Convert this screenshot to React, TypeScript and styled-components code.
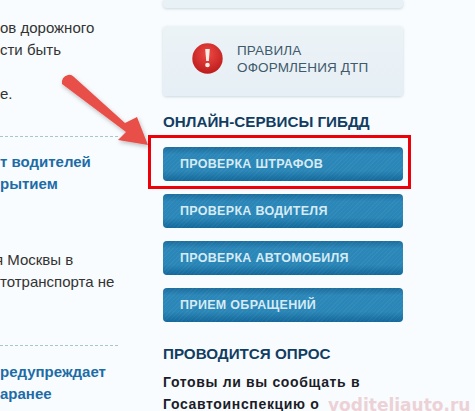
import React from "react";
import styled, { createGlobalStyle } from "styled-components";

const GlobalStyle = createGlobalStyle`
	html, body {
		margin: 0;
		padding: 0;
		background: #f8fcfe;
	}
`;

const Page = styled.div`
	position: relative;
	width: 475px;
	height: 411px;
	overflow: hidden;
	display: flex;
	background: #f8fcfe;
	font-family: "Liberation Sans", Arial, sans-serif;
`;

const Article = styled.div`
	width: 118px;
	margin-right: 45px;
	padding-top: 17px;
	flex: none;
	overflow: hidden;
`;

const Line = styled.div<{ $shift?: number }>`
	height: 22px;
	line-height: 22px;
	font-size: 15px;
	white-space: nowrap;
	color: #333;
	margin-left: ${props => props.$shift || 0}px;
`;

const LinkLine = styled(Line)`
	font-weight: bold;
	color: #1d6ca6;
`;

const Divider = styled.div<{ $top: number; $bottom: number }>`
	border-top: 1px dashed #a9c7c9;
	margin-top: ${props => props.$top}px;
	margin-bottom: ${props => props.$bottom}px;
`;

const Gap = styled.div<{ $size: number }>`
	height: ${props => props.$size}px;
`;

const Sidebar = styled.div`
	width: 240px;
	flex: none;
	display: flex;
	flex-direction: column;

	& > * {
		flex: none;
	}
`;

const CutCard = styled.div`
	height: 8px;
	background: #e8f1f6;
	border-radius: 0 0 4px 4px;
	box-shadow: 0 1px 3px rgba(120, 150, 170, 0.35);
`;

const RulesCard = styled.div`
	height: 70px;
	margin-top: 18px;
	display: flex;
	align-items: center;
	gap: 14px;
	padding: 0 0 5px 29px;
	box-sizing: border-box;
	background: linear-gradient(#ecf3f7, #e6eff5);
	border-radius: 4px;
	box-shadow: 0 1px 3px rgba(120, 150, 170, 0.35);
`;

const RulesText = styled.div`
	font-size: 13.5px;
	line-height: 17px;
	letter-spacing: 0.15px;
	color: #3f5a6b;
`;

const Heading = styled.div<{ $top: number }>`
	margin-top: ${props => props.$top}px;
	font-size: 15.2px;
	line-height: 18px;
	font-weight: bold;
	white-space: nowrap;
	color: #123d62;
`;

const ServiceList = styled.div`
	margin-top: 16px;
	display: flex;
	flex-direction: column;
	gap: 13px;
`;

const ServiceButton = styled.div`
	height: 34px;
	flex: none;
	display: flex;
	align-items: center;
	padding-left: 17px;
	font-size: 12.5px;
	font-weight: bold;
	letter-spacing: 0.3px;
	color: #d6ebf5;
	border-radius: 4px;
	background:
		repeating-linear-gradient(135deg, rgba(255, 255, 255, 0.04) 0 1px, transparent 1px 3px),
		linear-gradient(#1c6d9c 0, #2b87b8 22%, #2a86b6 70%, #13689a 100%);
`;

const Question = styled.div`
	margin-top: 8px;
	font-size: 14px;
	line-height: 22px;
	font-weight: bold;
	letter-spacing: 0.65px;
	white-space: nowrap;
	color: #1c1c28;
`;

const Highlight = styled.div`
	position: absolute;
	left: 148px;
	top: 135px;
	width: 263px;
	height: 54px;
	box-sizing: border-box;
	border: 3px solid #ee0008;
`;

const ArrowOverlay = styled.svg`
	position: absolute;
	left: 0;
	top: 0;
	pointer-events: none;
`;

const Watermark = styled.div`
	position: absolute;
	left: 328px;
	top: 395px;
	font-family: "DejaVu Sans", sans-serif;
	font-size: 17px;
	line-height: 20px;
	font-weight: bold;
	white-space: nowrap;
	color: #ecd2d6;
`;

function WarningIcon() {
	return (
		<svg width="31" height="31" viewBox="0 0 31 31" style={{ flex: "none" }}>
			<defs>
				<radialGradient id="warn" cx="50%" cy="35%" r="65%">
					<stop offset="0" stopColor="#ee4a45" />
					<stop offset="1" stopColor="#bd1c1c" />
				</radialGradient>
			</defs>
			<circle cx="15.5" cy="15.5" r="15.2" fill="url(#warn)" />
			<path d="M13.2 6h4.6l-1 12h-2.6z" fill="#fbeee6" />
			<circle cx="15.5" cy="22" r="2.3" fill="#fbeee6" />
		</svg>
	);
}

const services = ["ПРОВЕРКА ШТРАФОВ", "ПРОВЕРКА ВОДИТЕЛЯ", "ПРОВЕРКА АВТОМОБИЛЯ", "ПРИЕМ ОБРАЩЕНИЙ"];

export default function App() {
	return (
		<Page>
			<GlobalStyle />
			<Article>
				<Line>ов дорожного</Line>
				<Line>сти быть</Line>
				<Gap $size={22} />
				<Line>е.</Line>
				<Divider $top={31} $bottom={14} />
				<LinkLine>т водителей</LinkLine>
				<LinkLine>рытием</LinkLine>
				<Gap $size={54} />
				<Line $shift={-5}>я Москвы в</Line>
				<Line>тотранспорта не</Line>
				<Divider $top={52} $bottom={15} />
				<LinkLine>редупреждает</LinkLine>
				<LinkLine>аранее</LinkLine>
			</Article>
			<Sidebar>
				<CutCard />
				<RulesCard>
					<WarningIcon />
					<RulesText>
						ПРАВИЛА
						<br />
						ОФОРМЛЕНИЯ ДТП
					</RulesText>
				</RulesCard>
				<Heading $top={17}>ОНЛАЙН-СЕРВИСЫ ГИБДД</Heading>
				<ServiceList>
					{services.map(name => (
						<ServiceButton key={name}>{name}</ServiceButton>
					))}
				</ServiceList>
				<Heading $top={23}>ПРОВОДИТСЯ ОПРОС</Heading>
				<Question>
					Готовы ли вы сообщать в
					<br />
					Госавтоинспекцию о
				</Question>
			</Sidebar>
			<Highlight />
			<ArrowOverlay width="475" height="411" viewBox="0 0 475 411">
				<defs>
					<filter id="arrowShadow" x="-20%" y="-20%" width="140%" height="140%">
						<feDropShadow dx="1" dy="2" stdDeviation="2" floodColor="#000" floodOpacity="0.25" />
					</filter>
				</defs>
				<path
					d="M62 84 Q61 77 68 75 Q71 74 74 77 L125 123 L137 117 L148 145 L118 140 L126 132 Z"
					fill="#e8504a"
					filter="url(#arrowShadow)"
				/>
			</ArrowOverlay>
			<Watermark>voditeliauto.ru</Watermark>
		</Page>
	);
}
